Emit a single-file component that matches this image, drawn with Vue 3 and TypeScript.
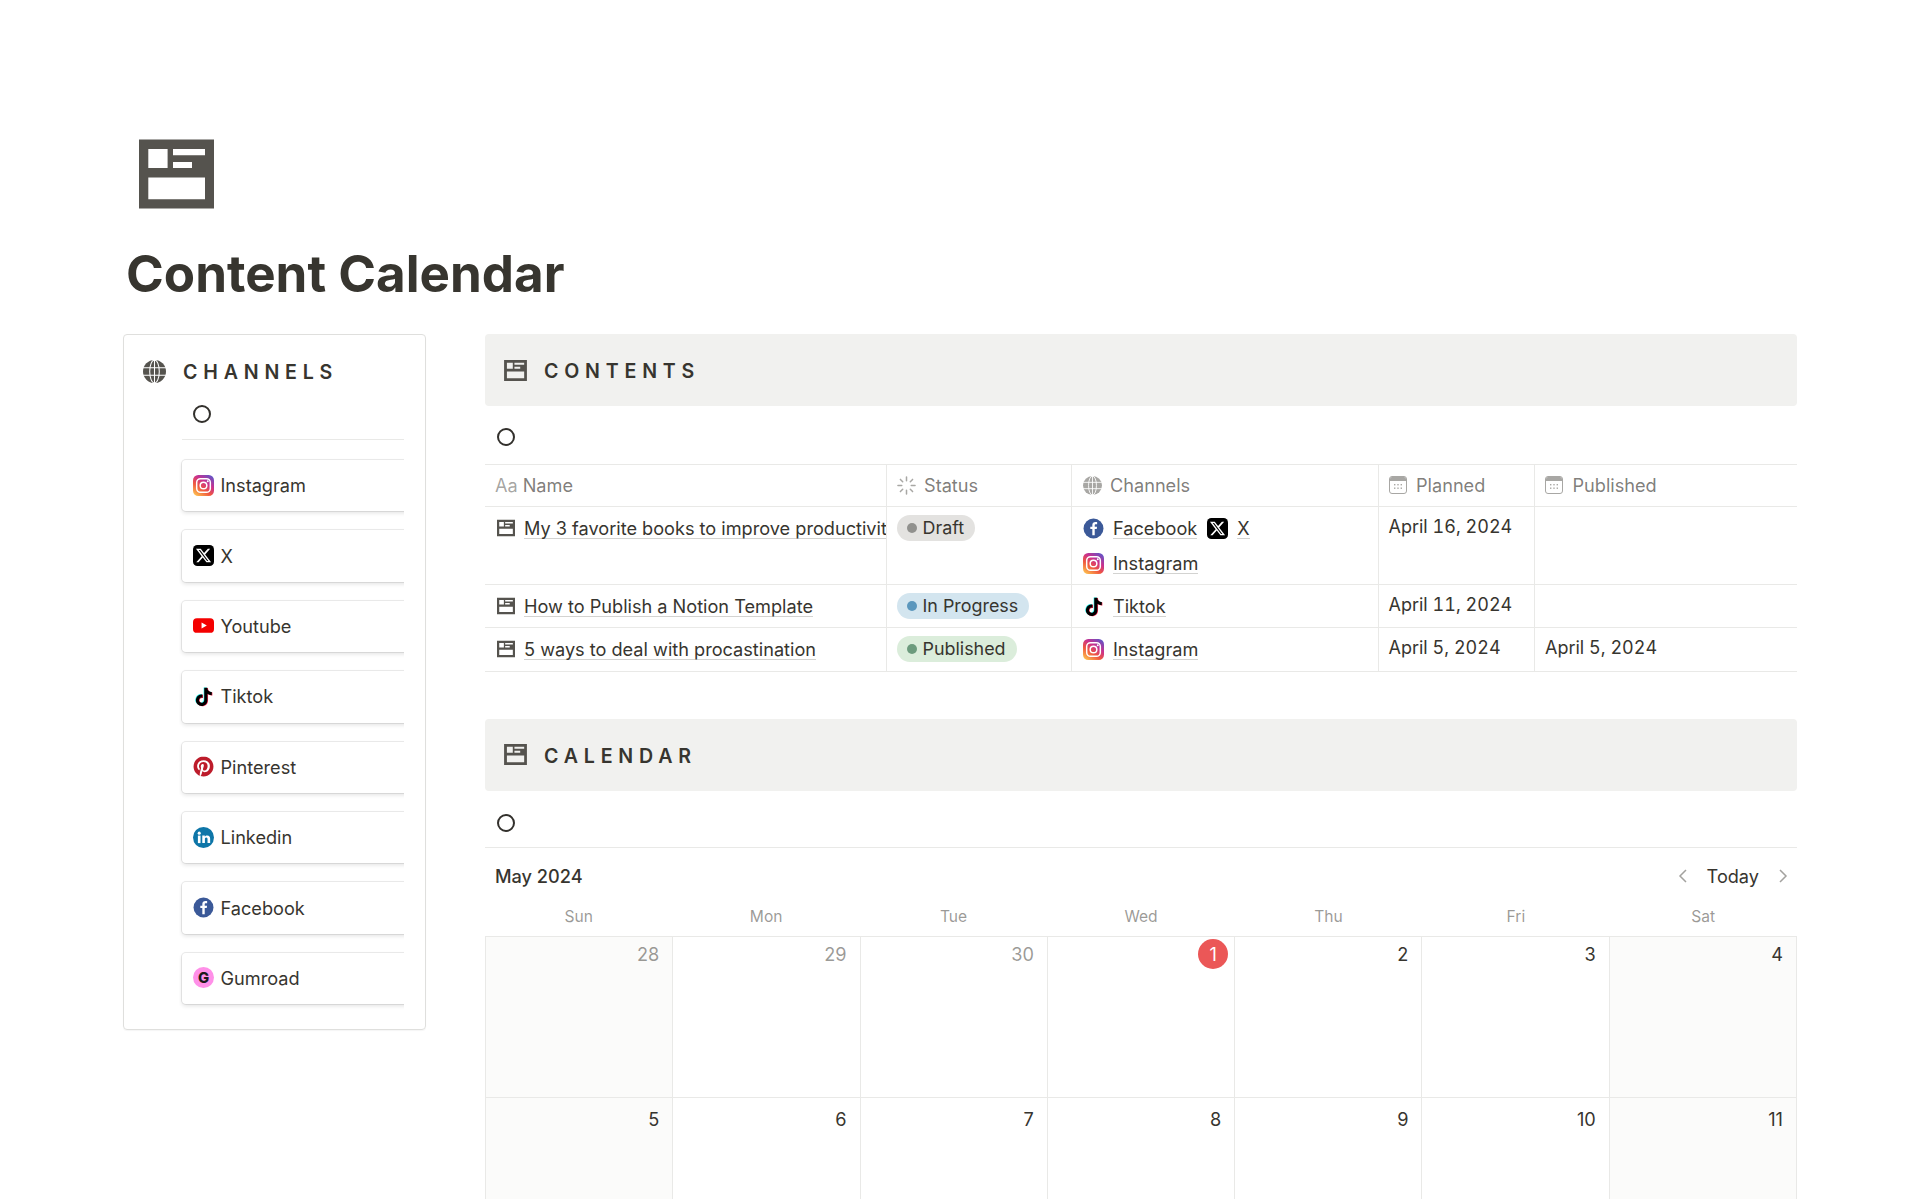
<script setup lang="ts">
interface Ch { name: string; icon: string }
const channels: Ch[] = [
  { name: 'Instagram', icon: 'ig' },
  { name: 'X', icon: 'x' },
  { name: 'Youtube', icon: 'yt' },
  { name: 'Tiktok', icon: 'tt' },
  { name: 'Pinterest', icon: 'pin' },
  { name: 'Linkedin', icon: 'li' },
  { name: 'Facebook', icon: 'fb' },
  { name: 'Gumroad', icon: 'gr' },
]
const headers = [
  { label: 'Name', kind: 'aa' },
  { label: 'Status', kind: 'status' },
  { label: 'Channels', kind: 'globe' },
  { label: 'Planned', kind: 'cal' },
  { label: 'Published', kind: 'cal' },
]
const rows = [
  { name: 'My 3 favorite books to improve productivity', status: 'Draft', tone: 'draft', planned: 'April 16, 2024', published: '', tall: true,
    ch: [{ name: 'Facebook', icon: 'fb' }, { name: 'X', icon: 'x' }, { name: 'Instagram', icon: 'ig' }] },
  { name: 'How to Publish a Notion Template', status: 'In Progress', tone: 'progress', planned: 'April 11, 2024', published: '', tall: false,
    ch: [{ name: 'Tiktok', icon: 'tt' }] },
  { name: '5 ways to deal with procastination', status: 'Published', tone: 'published', planned: 'April 5, 2024', published: 'April 5, 2024', tall: false,
    ch: [{ name: 'Instagram', icon: 'ig' }] },
]
const weekdays = ['Sun', 'Mon', 'Tue', 'Wed', 'Thu', 'Fri', 'Sat']
const days = [
  { n: '28', muted: true }, { n: '29', muted: true }, { n: '30', muted: true }, { n: '1', today: true },
  { n: '2' }, { n: '3' }, { n: '4' }, { n: '5' }, { n: '6' }, { n: '7' }, { n: '8' }, { n: '9' }, { n: '10' }, { n: '11' },
] as { n: string; muted?: boolean; today?: boolean }[]
</script>

<template>
  <div class="page">
    <svg class="defs" aria-hidden="true">
      <defs>
        <linearGradient id="igg" x1="0.15" y1="1" x2="0.85" y2="0">
          <stop offset="0" stop-color="#fdc04f" />
          <stop offset="0.35" stop-color="#f0583f" />
          <stop offset="0.65" stop-color="#c9308f" />
          <stop offset="1" stop-color="#5f55c8" />
        </linearGradient>
        <symbol id="layout" viewBox="0 0 75 69">
          <path fill="#55534e" fill-rule="evenodd" d="M0 0h75v69H0zM9.3 9.4v19h19.3v-19zM34 9.4v6.3h32V9.4zM34 22.4v6h19v-6zM9.3 38v21.7H66V38z" />
        </symbol>
        <symbol id="globe" viewBox="0 0 24 24">
          <circle cx="12" cy="12" r="12" fill="currentColor" />
          <g fill="none" stroke="#fff" stroke-width="1.1">
            <ellipse cx="12" cy="12" rx="5" ry="12" />
            <path d="M12 0v24M0 8h24M0 16h24" />
          </g>
        </symbol>
        <symbol id="cal" viewBox="0 0 18 18">
          <rect x="0.5" y="0.5" width="17" height="17" rx="2.5" fill="#fff" stroke="#a8a7a4" />
          <path d="M1 3a2 2 0 0 1 2-2h12a2 2 0 0 1 2 2v2H1z" fill="#a8a7a4" />
          <g fill="#a8a7a4">
            <rect x="5" y="8" width="1.4" height="1.4" /><rect x="8.3" y="8" width="1.4" height="1.4" /><rect x="11.6" y="8" width="1.4" height="1.4" />
            <rect x="5" y="11.5" width="1.4" height="1.4" /><rect x="8.3" y="11.5" width="1.4" height="1.4" /><rect x="11.6" y="11.5" width="1.4" height="1.4" />
          </g>
        </symbol>
        <symbol id="status" viewBox="0 0 20 20">
          <g stroke="#a8a7a4" stroke-width="1.6" stroke-linecap="round">
            <path d="M10 1v4M10 15v4M1 10h4M15 10h4M3.6 3.6l2.4 2.4M14 14l2.4 2.4M3.6 16.4L6 14M14 6l2.4-2.4" />
          </g>
        </symbol>
        <symbol id="ig" viewBox="0 0 24 24">
          <rect width="24" height="24" rx="6" fill="url(#igg)" />
          <rect x="4.2" y="4.2" width="15.6" height="15.6" rx="4.4" fill="none" stroke="#fff" stroke-width="1.7" />
          <circle cx="12" cy="12" r="3.8" fill="none" stroke="#fff" stroke-width="1.7" />
          <circle cx="16.9" cy="7.1" r="1.1" fill="#fff" />
        </symbol>
        <symbol id="x" viewBox="0 0 24 24">
          <rect width="24" height="24" rx="5" fill="#000" />
          <path transform="translate(2.4 2.4) scale(.8)" fill="#fff" d="M18.244 2.25h3.308l-7.227 8.26 8.502 11.24H16.17l-5.214-6.817L4.99 21.75H1.68l7.73-8.835L1.254 2.25H8.08l4.713 6.231zm-1.161 17.52h1.833L7.084 4.126H5.117z" />
        </symbol>
        <symbol id="yt" viewBox="0 0 24 24">
          <rect y="3.6" width="24" height="16.8" rx="4.5" fill="#f40000" />
          <path d="M9.8 8.6l6 3.4-6 3.4z" fill="#fff" />
        </symbol>
        <symbol id="tt" viewBox="0 0 24 24">
          <path transform="translate(-.7 -.5) scale(1.04)" fill="#25f4ee" d="M19.59 6.69a4.83 4.83 0 0 1-3.77-4.25V2h-3.45v13.67a2.89 2.89 0 0 1-5.2 1.74 2.89 2.89 0 0 1 2.31-4.64 2.93 2.93 0 0 1 .88.13V9.4a6.84 6.84 0 0 0-1-.05A6.33 6.33 0 0 0 5 20.1a6.34 6.34 0 0 0 10.86-4.43v-7a8.16 8.16 0 0 0 4.77 1.52v-3.4a4.85 4.85 0 0 1-1-.1z" />
          <path transform="translate(.7 .3) scale(1.04)" fill="#fe2c55" d="M19.59 6.69a4.83 4.83 0 0 1-3.77-4.25V2h-3.45v13.67a2.89 2.89 0 0 1-5.2 1.74 2.89 2.89 0 0 1 2.31-4.64 2.93 2.93 0 0 1 .88.13V9.4a6.84 6.84 0 0 0-1-.05A6.33 6.33 0 0 0 5 20.1a6.34 6.34 0 0 0 10.86-4.43v-7a8.16 8.16 0 0 0 4.77 1.52v-3.4a4.85 4.85 0 0 1-1-.1z" />
          <path transform="translate(0 -.1) scale(1.04)" fill="#000" d="M19.59 6.69a4.83 4.83 0 0 1-3.77-4.25V2h-3.45v13.67a2.89 2.89 0 0 1-5.2 1.74 2.89 2.89 0 0 1 2.31-4.64 2.93 2.93 0 0 1 .88.13V9.4a6.84 6.84 0 0 0-1-.05A6.33 6.33 0 0 0 5 20.1a6.34 6.34 0 0 0 10.86-4.43v-7a8.16 8.16 0 0 0 4.77 1.52v-3.4a4.85 4.85 0 0 1-1-.1z" />
        </symbol>
        <symbol id="pin" viewBox="0 0 24 24">
          <circle cx="12" cy="12" r="11.4" fill="#fff" />
          <path transform="translate(.6 .6) scale(.95)" fill="#bd1c2b" d="M12.017 0C5.396 0 .029 5.367.029 11.987c0 5.079 3.158 9.417 7.618 11.162-.105-.949-.199-2.403.041-3.439.219-.937 1.406-5.957 1.406-5.957s-.359-.72-.359-1.781c0-1.663.967-2.911 2.168-2.911 1.024 0 1.518.769 1.518 1.688 0 1.029-.653 2.567-.992 3.992-.285 1.193.6 2.165 1.775 2.165 2.128 0 3.768-2.245 3.768-5.487 0-2.861-2.063-4.869-5.008-4.869-3.41 0-5.409 2.562-5.409 5.199 0 1.033.394 2.143.889 2.741.099.12.112.225.085.345-.09.375-.293 1.199-.334 1.363-.053.225-.172.271-.401.165-1.495-.69-2.433-2.878-2.433-4.646 0-3.776 2.748-7.252 7.92-7.252 4.158 0 7.392 2.967 7.392 6.923 0 4.135-2.607 7.462-6.233 7.462-1.214 0-2.354-.629-2.758-1.379l-.749 2.848c-.269 1.045-1.004 2.352-1.498 3.146 1.123.345 2.306.535 3.55.535 6.607 0 11.985-5.365 11.985-11.987C23.97 5.39 18.592.026 11.985.026L12.017 0z" />
        </symbol>
        <symbol id="li" viewBox="0 0 24 24">
          <circle cx="12" cy="12" r="12" fill="#0e76a8" />
          <rect x="5.6" y="9.8" width="3" height="8.6" fill="#fff" />
          <circle cx="7.1" cy="7" r="1.75" fill="#fff" />
          <path fill="#fff" d="M10.6 9.8h2.9v1.2c.5-.8 1.5-1.4 2.8-1.4 2.4 0 3.3 1.5 3.3 3.9v4.9h-3v-4.4c0-1.2-.3-2-1.4-2-1.2 0-1.6.9-1.6 2v4.4h-3z" />
        </symbol>
        <symbol id="fb" viewBox="0 0 24 24">
          <circle cx="12" cy="12" r="11.4" fill="#3b5998" />
          <path fill="#fff" d="M13.4 19.6v-6.9h2.3l.35-2.7H13.4V8.3c0-.8.2-1.3 1.35-1.3h1.4V4.6c-.25 0-1.1-.1-2.05-.1-2.05 0-3.45 1.25-3.45 3.5V10H8.35v2.7h2.3v6.9z" />
        </symbol>
        <symbol id="gr" viewBox="0 0 24 24">
          <circle cx="12" cy="12" r="12" fill="#ff90e8" />
          <text x="12" y="18" text-anchor="middle" font-family="Inter, sans-serif" font-size="17" font-weight="800" fill="#1a1a1a">G</text>
        </symbol>
      </defs>
    </svg>

    <svg class="page-icon"><use href="#layout" /></svg>
    <h1 class="title">Content Calendar</h1>

    <div class="columns">
      <aside class="card">
        <div class="card-head">
          <svg class="globe-lg"><use href="#globe" /></svg>
          <span class="heading">CHANNELS</span>
        </div>
        <div class="card-body">
          <div class="ring-row small"><span class="ring"></span></div>
          <div class="tiles">
            <div v-for="c in channels" :key="c.name" class="tile">
              <svg class="logo"><use :href="'#' + c.icon" /></svg>
              <span>{{ c.name }}</span>
            </div>
          </div>
        </div>
      </aside>

      <main class="main">
        <div class="banner">
          <svg class="banner-icon"><use href="#layout" /></svg>
          <span class="heading">CONTENTS</span>
        </div>
        <div class="ring-row"><span class="ring"></span></div>
        <div class="table">
          <div class="tr head">
            <div v-for="h in headers" :key="h.label" class="th">
              <span v-if="h.kind === 'aa'" class="aa">Aa</span>
              <svg v-else-if="h.kind === 'status'" class="th-icon status"><use href="#status" /></svg>
              <svg v-else-if="h.kind === 'globe'" class="th-icon globe"><use href="#globe" /></svg>
              <svg v-else class="th-icon calendar"><use href="#cal" /></svg>
              <span>{{ h.label }}</span>
            </div>
          </div>
          <div v-for="r in rows" :key="r.name" class="tr" :class="{ tall: r.tall }">
            <div class="td name">
              <svg class="row-icon"><use href="#layout" /></svg>
              <span class="link">{{ r.name }}</span>
            </div>
            <div class="td">
              <span class="pill" :class="r.tone"><i class="dot"></i>{{ r.status }}</span>
            </div>
            <div class="td chs">
              <span v-for="c in r.ch" :key="c.name" class="ch">
                <svg class="logo"><use :href="'#' + c.icon" /></svg>
                <span class="link">{{ c.name }}</span>
              </span>
            </div>
            <div class="td date">{{ r.planned }}</div>
            <div class="td date">{{ r.published }}</div>
          </div>
        </div>

        <div class="banner second">
          <svg class="banner-icon"><use href="#layout" /></svg>
          <span class="heading">CALENDAR</span>
        </div>
        <div class="ring-row cal-ring"><span class="ring"></span></div>
        <div class="cal">
          <div class="cal-top">
            <span class="month">May 2024</span>
            <div class="nav">
              <svg class="chev" viewBox="0 0 10 16"><path d="M8 2L2 8l6 6" /></svg>
              <span>Today</span>
              <svg class="chev" viewBox="0 0 10 16"><path d="M2 2l6 6-6 6" /></svg>
            </div>
          </div>
          <div class="weekdays">
            <div v-for="w in weekdays" :key="w">{{ w }}</div>
          </div>
          <div class="grid">
            <div v-for="(d, i) in days" :key="d.n" class="day" :class="{ weekend: i % 7 === 0 || i % 7 === 6, muted: d.muted }">
              <span class="num" :class="{ today: d.today }">{{ d.n }}</span>
            </div>
          </div>
        </div>
      </main>
    </div>
  </div>
</template>

<style scoped>
.page {
  position: relative;
  width: 1920px;
  height: 1199px;
  overflow: hidden;
  background: #fff;
  box-sizing: border-box;
  padding: 139px 0 0 123px;
  font-family: Inter, "Liberation Sans", sans-serif;
  font-size: 18.15px;
  color: #37352f;
}
.defs { position: absolute; width: 0; height: 0; }
.page-icon { display: block; width: 75px; height: 70px; margin-left: 16px; }
.title {
  margin: 36px 0 0;
  padding-left: 3px;
  height: 56px;
  line-height: 56px;
  font-size: 51.1px;
  font-weight: 700;
}
.columns { display: flex; gap: 59px; margin-top: 33px; align-items: flex-start; }
.card {
  width: 303px;
  height: 696px;
  box-sizing: border-box;
  border: 1px solid #dfdfdd;
  border-radius: 4px;
  box-shadow: 0 1px 1px rgba(0, 0, 0, .04);
}
.card-head { display: flex; align-items: center; height: 25px; margin: 24px 0 0 19px; }
.globe-lg { width: 23px; height: 23px; color: #55534e; margin-right: 17px; }
.heading { font-size: 19.6px; font-weight: 600; letter-spacing: 5.8px; line-height: 1; margin-top: 3px; }
.card-body { margin: 0 0 0 55px; padding-left: 3px; width: 222px; overflow: hidden; }
.ring-row { display: flex; align-items: center; height: 53.5px; padding: 4px 0 0 12px; border-bottom: 1px solid #e9e9e7; }
.ring-row.small { height: 51px; padding-left: 11px; }
.ring-row.cal-ring { height: 49.5px; padding-top: 7px; }
.ring { display: block; width: 18px; height: 18px; box-sizing: border-box; border: 2px solid #32302c; border-radius: 50%; }
.tiles { display: flex; flex-direction: column; gap: 19px; padding: 20px 0 8px 0; }
.tile {
  display: flex;
  align-items: center;
  width: 260px;
  height: 51.4px;
  flex: none;
  padding: 0 0 1px 11px;
  box-sizing: border-box;
  border-radius: 4px;
  box-shadow: 0 0 0 1px rgba(15, 15, 15, .08), 0 2px 4px rgba(15, 15, 15, .12);
}
.logo { width: 21px; height: 21px; flex: none; margin-right: 6.5px; }
.main { width: 1312px; flex: none; }
.banner {
  display: flex;
  align-items: center;
  height: 72px;
  padding-left: 19px;
  background: #f1f1ef;
  border-radius: 4px;
}
.banner.second { margin-top: 47px; }
.banner-icon { width: 23px; height: 21px; margin-right: 17px; }
.tr {
  display: grid;
  grid-template-columns: 402px 185px 306.5px 156.5px 1fr;
  height: 43.4px;
  border-bottom: 1px solid #e9e9e7;
  box-sizing: border-box;
}
.tr.head { height: 42.7px; }
.tr.tall { height: 77.9px; }
.th {
  display: flex;
  align-items: center;
  padding-left: 10px;
  color: rgba(55, 53, 47, .65);
  border-right: 1px solid #e9e9e7;
  box-sizing: border-box;
  white-space: nowrap;
}
.th:last-child, .td:last-child { border-right: 0; }
.aa { color: rgba(55, 53, 47, .45); margin-right: 5px; }
.th-icon { width: 19px; height: 19px; margin-right: 8px; flex: none; }
.th-icon.globe { color: #a8a7a4; margin-left: 1px; }
.th-icon.calendar { width: 18px; height: 18px; margin-right: 9.5px; }
.td {
  padding: 7px 0 0 10px;
  border-right: 1px solid #e9e9e7;
  box-sizing: border-box;
  line-height: 26px;
  white-space: nowrap;
  overflow: hidden;
}
.td.date { font-variant-numeric: tabular-nums; font-size: 18px; }
.td.name { display: flex; padding-left: 12px; }
.row-icon { width: 18px; height: 18px; flex: none; margin: 5px 9px 0 0; }
.link { border-bottom: 1px solid rgba(55, 53, 47, .22); line-height: 19px; display: inline-block; align-self: flex-start; margin-top: 5px; }
.pill {
  display: inline-flex;
  align-items: center;
  vertical-align: top;
  height: 26px;
  padding: 0 11px 0 10px;
  border-radius: 13px;
  font-size: 17.9px;
  margin-top: 0.5px;
}
.dot { display: block; width: 10px; height: 10px; border-radius: 50%; margin-right: 5.5px; }
.pill.draft { background: #e3e2e0; }
.pill.draft .dot { background: #91918e; }
.pill.progress { background: #d3e5ef; }
.pill.progress .dot { background: #5b97bd; }
.pill.published { background: #dbeddb; }
.pill.published .dot { background: #6c9b7d; }
.chs { display: flex; flex-wrap: wrap; column-gap: 10px; row-gap: 9px; align-content: flex-start; padding: 8.5px 14px 0 11px; }
.ch { display: inline-flex; align-items: center; height: 26px; }
.ch .logo { width: 21px; height: 21px; margin-right: 9px; }
.ch .link { margin-top: 0; align-self: auto; }
.cal-top { display: flex; align-items: center; justify-content: space-between; height: 56px; padding: 0 9px 0 10px; }
.month { font-weight: 500; }
.nav { display: flex; align-items: center; gap: 19px; }
.chev { width: 10px; height: 16px; fill: none; stroke: #a3a29f; stroke-width: 1.5; }
.weekdays { display: grid; grid-template-columns: repeat(7, 1fr); height: 32px; line-height: 25px; text-align: center; font-size: 15.6px; color: rgba(55, 53, 47, .5); }
.grid { display: grid; grid-template-columns: repeat(7, 1fr); grid-auto-rows: 161px; border-top: 1px solid #e9e9e7; border-left: 1px solid #e9e9e7; }
.day { border-right: 1px solid #e9e9e7; border-bottom: 1px solid #e9e9e7; box-sizing: border-box; text-align: right; padding: 2px 13px 0 0; }
.day:nth-child(n + 8) { padding-top: 6px; }
.day.weekend { background: #fbfbfa; }
.day.muted { color: rgba(55, 53, 47, .5); }
.num { display: inline-block; line-height: 30px; }
.num.today { width: 30px; height: 30px; margin-right: -7px; border-radius: 50%; background: #eb5757; color: #fff; text-align: center; }
</style>

<style>
html, body { margin: 0; background: #fff; }
</style>
